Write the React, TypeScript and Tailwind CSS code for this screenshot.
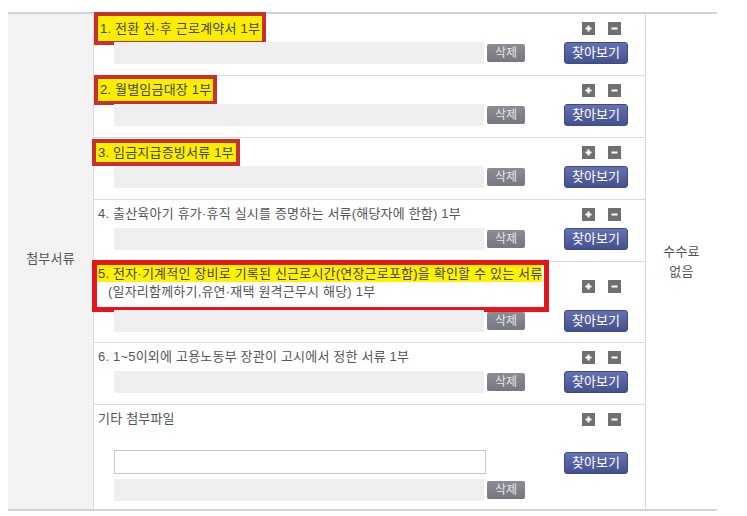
import React from 'react';

interface DocRow {
  label: string;
  mark?: 'dark' | 'none';
  box?: string;
}

const rows: DocRow[] = [
  { label: '1. 전환 전·후 근로계약서 1부', mark: 'dark', box: 'h-[25px] leading-[25px] px-[2px] outline-4' },
  { label: '2. 월별임금대장 1부', mark: 'dark', box: 'h-[22px] leading-[22px] px-[2px] outline-4' },
  { label: '3. 임금지급증빙서류 1부', mark: 'dark', box: 'h-[19px] leading-[19px] px-[2px] outline-4 -ml-[2px]' },
  { label: '4. 출산육아기 휴가·휴직 실시를 증명하는 서류(해당자에 한함) 1부' },
];

const PlusMinus = () => (
  <div className="flex gap-[13px] pl-[18px]">
    <svg width="13" height="13" viewBox="0 0 13 13">
      <rect width="13" height="13" fill="#707070" />
      <rect x="3.5" y="5.5" width="6" height="2" fill="#fff" />
      <rect x="5.5" y="3.5" width="2" height="6" fill="#fff" />
    </svg>
    <svg width="13" height="13" viewBox="0 0 13 13">
      <rect width="13" height="13" fill="#707070" />
      <rect x="3.5" y="5.5" width="6" height="2" fill="#fff" />
    </svg>
  </div>
);

const FindButton = () => (
  <button className="w-[64px] h-[22px] rounded-[3px] border border-[#3e4987] bg-gradient-to-b from-[#6470b0] to-[#46518f] text-white text-[13px] leading-[20px] tracking-normal">
    찾아보기
  </button>
);

const FileInput = () => (
  <div className="flex items-center pl-[16px]">
    <div className="w-[370px] h-[22px] bg-[#efefef]" />
    <button className="ml-[3px] w-[38px] h-[18px] rounded-[2px] bg-gradient-to-b from-[#8a8d94] to-[#757880] text-[#e6e6e6] text-[12px] leading-[18px] tracking-normal">
      삭제
    </button>
  </div>
);

export default function App() {
  return (
    <div className="pt-[12px] pl-[8px] bg-white min-h-[516px] font-['Liberation_Sans','Noto_Sans_CJK_KR',sans-serif] text-[13px] text-[#555] tracking-[0.2px]">
      <div className="w-[709px] flex border-t-2 border-b-2 border-[#d2d2d2]">
        <div className="w-[86px] bg-[#f3f3f3] border-r border-[#d9d9d9] flex items-center justify-center pb-[6px]">
          첨부서류
        </div>

        <div className="w-[552px] border-r border-[#d9d9d9]">
          {rows.map((row, i) => (
            <div
              key={i}
              className={`grid grid-cols-[1fr_64px] pl-[4px] pr-[17px] pb-[11px] ${i > 0 ? 'border-t border-[#dcdcdc]' : ''}`}
            >
              <div className="h-[28px] flex items-center">
                {row.mark === 'dark' ? (
                  <span className={`inline-block bg-[#fbee00] text-[#444] outline-[#c8302d] ${row.box}`}>
                    {row.label}
                  </span>
                ) : (
                  <span className="leading-[18px]">{row.label}</span>
                )}
              </div>
              <div className="h-[28px] flex items-center">
                <PlusMinus />
              </div>
              <FileInput />
              <div className="flex items-center">
                <FindButton />
              </div>
            </div>
          ))}

          <div className="grid grid-cols-[1fr_64px] pl-[4px] pr-[17px] pb-[10px] border-t border-[#dcdcdc]">
            <div className="h-[48px] flex items-center">
              <div className="inline-block outline-[5px] outline-[#e3161e] pr-[2px] -ml-[1px]">
                <div className="bg-[#fff200] text-[#444] leading-[17px] pl-[1px]">
                  5. 전자·기계적인 장비로 기록된 신근로시간(연장근로포함)을 확인할 수 있는 서류
                </div>
                <div className="leading-[20px] pl-[11px] pb-[5px]">(일자리함께하기,유연·재택 원격근무시 해당) 1부</div>
              </div>
            </div>
            <div className="h-[48px] flex items-center">
              <PlusMinus />
            </div>
            <FileInput />
            <div className="flex items-center">
              <FindButton />
            </div>
          </div>

          <div className="grid grid-cols-[1fr_64px] pl-[4px] pr-[17px] pb-[11px] border-t border-[#dcdcdc]">
            <div className="h-[28px] flex items-center">
              <span className="leading-[18px]">6. 1~5이외에 고용노동부 장관이 고시에서 정한 서류 1부</span>
            </div>
            <div className="h-[28px] flex items-center">
              <PlusMinus />
            </div>
            <FileInput />
            <div className="flex items-center">
              <FindButton />
            </div>
          </div>

          <div className="grid grid-cols-[1fr_64px] pl-[4px] pr-[17px] pb-[8px] border-t border-[#dcdcdc]">
            <div className="h-[28px] flex items-center">
              <span className="leading-[18px]">기타 첨부파일</span>
            </div>
            <div className="h-[28px] flex items-center">
              <PlusMinus />
            </div>
            <div className="pl-[16px] pt-[17px]">
              <div className="w-[372px] h-[24px] border border-[#c6c6c6] bg-white" />
            </div>
            <div className="pt-[19px]">
              <FindButton />
            </div>
            <div className="pt-[5px]">
              <FileInput />
            </div>
            <div />
          </div>
        </div>

        <div className="flex-1 flex items-center justify-center text-center leading-[20px]">
          수수료
          <br />
          없음
        </div>
      </div>
    </div>
  );
}
